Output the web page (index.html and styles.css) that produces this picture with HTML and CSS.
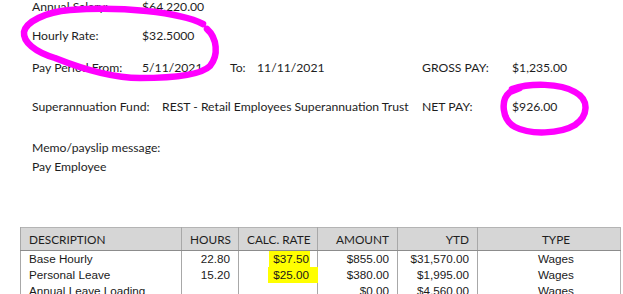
FILE: index.html
```html
<!DOCTYPE html>
<html>
<head>
<meta charset="utf-8">
<link rel="stylesheet" href="styles.css">
</head>
<body>
<div class="page">
  <div class="details">
    <div class="info-row row-salary">
      <span>Annual Salary:</span><span>$64,220.00</span>
    </div>
    <div class="info-row row-rate">
      <span>Hourly Rate:</span><span>$32.5000</span>
    </div>
    <div class="info-row row-period">
      <span>Pay Period From:</span><span>5/11/2021</span><span>To:</span><span>11/11/2021</span><span>GROSS PAY:</span><span>$1,235.00</span>
    </div>
    <div class="super-row">
      <span>Superannuation Fund:</span><span>REST - Retail Employees Superannuation Trust</span><span>NET PAY:</span><span>$926.00</span>
    </div>
    <div class="memo">
      <div>Memo/payslip message:</div>
      <div>Pay Employee</div>
    </div>
  </div>

  <table class="lines">
    <colgroup>
      <col class="c-desc"><col class="c-hours"><col class="c-rate"><col class="c-amt"><col class="c-ytd"><col class="c-type">
    </colgroup>
    <thead>
      <tr>
        <th class="left">DESCRIPTION</th>
        <th class="num">HOURS</th>
        <th class="num">CALC. RATE</th>
        <th class="num">AMOUNT</th>
        <th class="num">YTD</th>
        <th class="ctr">TYPE</th>
      </tr>
    </thead>
    <tbody>
      <tr>
        <td class="left">Base Hourly</td>
        <td class="num">22.80</td>
        <td class="num"><span class="hl hl-a">$37.50</span></td>
        <td class="num">$855.00</td>
        <td class="num">$31,570.00</td>
        <td class="ctr">Wages</td>
      </tr>
      <tr>
        <td class="left">Personal Leave</td>
        <td class="num">15.20</td>
        <td class="num"><span class="hl hl-b">$25.00</span></td>
        <td class="num">$380.00</td>
        <td class="num">$1,995.00</td>
        <td class="ctr">Wages</td>
      </tr>
      <tr>
        <td class="left">Annual Leave Loading</td>
        <td class="num"></td>
        <td class="num"></td>
        <td class="num">$0.00</td>
        <td class="num">$4,560.00</td>
        <td class="ctr">Wages</td>
      </tr>
    </tbody>
  </table>

  <svg class="ink" width="623" height="294" viewBox="0 0 623 294">
    <path d="M 203 24 C 180 12, 120 6, 70 10 C 45 12, 26 22, 24 32 C 23 42, 35 52, 55 58 C 80 68, 110 78, 140 78 C 170 78, 200 76, 210 66 C 219 55, 217 38, 207 29"/>
    <path d="M 512 89 C 530 83, 560 83, 575 92 C 590 100, 588 116, 575 125 C 560 134, 530 135, 515 127 C 502 120, 500 100, 510 92 L 520 88"/>
  </svg>
</div>
</body>
</html>
```

FILE: styles.css
```css
html, body {
  margin: 0;
  padding: 0;
  background: #ffffff;
}

.page {
  position: relative;
  width: 623px;
  height: 294px;
  overflow: hidden;
}

.details {
  display: flex;
  flex-direction: column;
  padding-left: 32px;
  font-family: "Lato", "Open Sans", sans-serif;
  font-size: 12.2px;
  line-height: 20px;
  color: #1e1e1e;
  white-space: nowrap;
}

.info-row {
  display: grid;
  grid-template-columns: 110px 88px 27px 165px 90px auto;
}

.row-salary { margin-top: -3px; }
.row-rate { margin-top: 9px; }
.row-period { margin-top: 12px; }

.super-row {
  display: grid;
  grid-template-columns: 130px 260px 90px auto;
  margin-top: 19px;
}

.memo {
  margin-top: 21px;
  line-height: 19px;
}

.lines {
  margin: 51px 0 0 20px;
  width: 600px;
  table-layout: fixed;
  border-collapse: collapse;
  border: 1px solid #b4b4b4;
}

.c-desc { width: 161px; }
.c-hours { width: 57px; }
.c-rate { width: 79px; }
.c-amt { width: 80px; }
.c-ytd { width: 80px; }
.c-type { width: 143px; }

.lines th {
  height: 22px;
  padding: 0 8px;
  background: #d6d6d6;
  border-left: 1px solid #a8a8a8;
  border-bottom: 1px solid #8c8c8c;
  font-family: "Lato", "Open Sans", sans-serif;
  font-size: 11.8px;
  font-weight: normal;
  color: #1e1e1e;
  white-space: nowrap;
}

.lines td {
  height: 16px;
  padding: 0 8px;
  border-left: 1px solid #a8a8a8;
  font-family: "Liberation Sans", Arial, sans-serif;
  font-size: 11.7px;
  line-height: 16px;
  color: #1a1a1a;
  white-space: nowrap;
}

.left { text-align: left; }
.num { text-align: right; }
.ctr { text-align: center; padding-left: 22px !important; }

.hl {
  display: inline-block;
  background: #ffff00;
  line-height: 16px;
}

.hl-a {
  padding: 0 1px 0 4px;
  margin-right: -1px;
}

.hl-b {
  padding: 0 9px 0 5px;
  margin-right: -9px;
}

.ink {
  position: absolute;
  top: 0;
  left: 0;
  pointer-events: none;
}

.ink path {
  fill: none;
  stroke: #ff00ff;
  stroke-width: 6.5;
  stroke-linecap: round;
  stroke-linejoin: round;
}
```
